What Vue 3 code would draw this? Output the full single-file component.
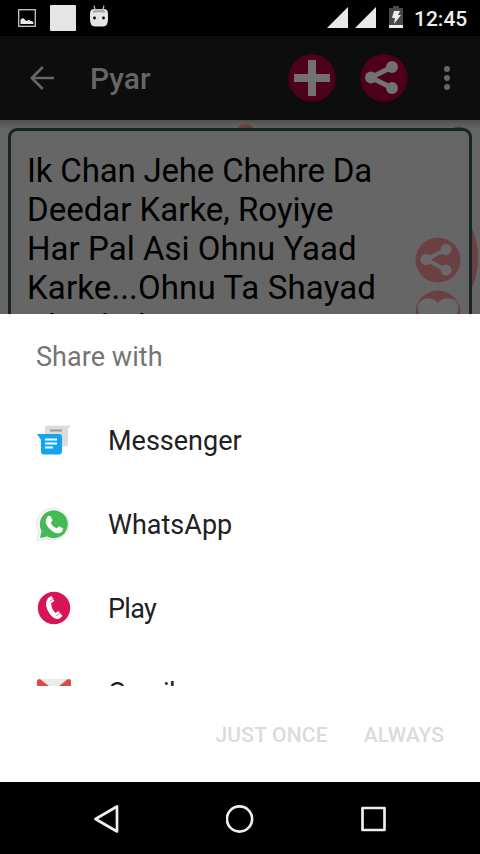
<script setup>
const lines = [
  { text: 'Ik Chan Jehe Chehre Da', spacing: -0.18 },
  { text: 'Deedar Karke, Royiye', spacing: 0 },
  { text: 'Har Pal Asi Ohnu Yaad', spacing: 0.03 },
  { text: 'Karke...Ohnu Ta Shayad', spacing: 0.13 },
  { text: 'Chaahida', spacing: -0.3 }
]
</script>

<template>
  <div class="screen">
    <header class="status">
      <svg class="s-pic" width="18" height="18" viewBox="0 0 18 18"><rect x=".7" y=".7" width="16.600" height="16.600" fill="none" stroke="#c4cac4" stroke-width="1.300"/><path d="M2.500 15v-4q1-2.500 3-1.500 1 .2 1.500 1.500l2 1q2-2 3.500 0 3-.5 3 3z" fill="#e8e8e8"/></svg>
      <span class="s-box"></span>
      <svg class="s-bot" width="18" height="22" viewBox="0 0 18 22"><path d="M4 .5l1 4M14 .5l-1 4" stroke="#bbb" stroke-width="1.200"/><path d="M0 9q0-5 4-5h10q4 0 4 5v5q0 7.500-5 7.500H5q-5 0-5-7.500z" fill="#e5e5e5"/><path d="M3.500 4.500h11l.5 3.500q-6-1.500-12 0z" fill="#aaa"/><circle cx="4.500" cy="13" r="1.400"/><circle cx="13.500" cy="13" r="1.400"/></svg>
      <span class="grow"></span>
      <svg class="s-sig" width="49" height="21" viewBox="0 0 49 21"><path d="M0 21L21 0v21zM28 21L49 0v21z" fill="#e8e8e8"/></svg>
      <svg class="s-bat" width="14" height="22" viewBox="0 0 14 22"><path d="M0 2h4V0h6v2h4v17H0z" fill="#494949"/><path d="M0 19h14v3H0z" fill="#eee"/><path d="M5 5h6l-2 4h3l-7 9 1-6H3z" fill="#eee"/></svg>
      <span class="time">12:45</span>
    </header>

    <div class="appbar">
      <svg class="back" width="26" height="24" viewBox="0 0 26 24" fill="none" stroke="#666" stroke-width="2.600"><path d="M25 12H3M13.800 1L2.800 12l11 11"/></svg>
      <h1>Pyar</h1>
      <span class="grow"></span>
      <svg class="add" width="48" height="48" viewBox="0 0 48 48"><circle cx="24" cy="24" r="23.700" fill="#4d0018"/><path d="M20 6h8v14h14v8H28v14h-8V28H6v-8h14z" fill="#727272"/></svg>
      <svg class="shr" width="48" height="48" viewBox="0 0 48 48"><circle cx="24" cy="24" r="23.700" fill="#4d0018"/><path d="M32 13L11 23.500l21 10.500" fill="none" stroke="#727272" stroke-width="5"/><g fill="#727272"><circle cx="32" cy="13" r="6"/><circle cx="11" cy="23.500" r="6"/><circle cx="32" cy="34" r="6"/></g></svg>
      <svg class="more" width="6" height="26" viewBox="0 0 6 26" fill="#666"><circle cx="3" cy="4" r="3"/><circle cx="3" cy="13" r="3"/><circle cx="3" cy="22" r="3"/></svg>
    </div>

    <main class="content">
      <svg class="backdrop" width="480" height="194" viewBox="0 0 480 194"><g fill="#6b4042"><circle cx="245.500" cy="14" r="10"/><circle cx="400" cy="138" r="78"/></g><circle cx="459" cy="17" r="10.500" fill="#4c4042"/></svg>
      <div class="card">
        <p><span v-for="l in lines" :key="l.text" :style="{ letterSpacing: l.spacing + 'px' }">{{ l.text }}</span></p>
        <div class="actions">
          <svg width="46" height="46" viewBox="0 0 46 46"><circle cx="23" cy="23" r="22.500" fill="#6b4042"/><path d="M31 12.500L11 22.500l20 10.500" fill="none" stroke="#696969" stroke-width="4"/><g fill="#696969"><circle cx="31" cy="12.500" r="5.500"/><circle cx="11" cy="22.500" r="5.500"/><circle cx="31" cy="33" r="5.500"/></g></svg>
          <svg width="46" height="46" viewBox="0 0 46 46"><circle cx="23" cy="23" r="22.500" fill="#6b4042"/><path d="M23 13C19 7 10 7 5.500 11c-8 8 2 20 17.500 31 15.500-11 25.500-23 17.500-31-4.500-4-13.500-4-17.500 2z" fill="#696969"/></svg>
        </div>
      </div>
    </main>

    <section class="sheet">
      <h2>Share with</h2>
      <ul>
        <li>
          <svg width="36" height="36" viewBox="0 0 36 36"><path d="M10 3.500h25l-3 4v15q0 2-2 2H12q-3 0-3-3v-16z" fill="#dcdcdc"/><path d="M14 8.500h12" stroke="#999" stroke-width="2"/><path d="M1 12h22q3 0 3 3v14.500q0 3-3 3H8q-3 0-3-3V18z" fill="#11a5f0"/><path d="M9 17.500h12M9 21.500h12M9 25.500h8" stroke="#fff" stroke-width="2"/></svg>
          <span>Messenger</span>
        </li>
        <li>
          <svg width="36" height="36" viewBox="0 0 36 36"><path d="M1 35l2-9A16 16 0 1 1 10 32.500z" fill="#fafafa" stroke="#d8d8d8" stroke-width=".8"/><path d="M4 32l1.500-7A14 14 0 1 1 11 30.500z" fill="#45b953"/><path d="M11.500 10.500q1-1 2-.5l1.500.5 1.500 4-1.800 2.500q2 4 6 5.500l2-2.300 4.300 2q.5 4-4 5-5 .5-10-5-6-6-1.500-11.700z" fill="#fff"/></svg>
          <span>WhatsApp</span>
        </li>
        <li class="play">
          <svg width="36" height="36" viewBox="0 0 36 36"><circle cx="18" cy="18" r="16.200" fill="#d81458"/><path d="M12 8l3.500-2 3 5-3.300 2q0 6 4.300 10l3-2 4 5-3 2.500q-4 2-9-3.500-7.500-10-2.500-17z" fill="#fff"/><path d="M13.500 11.500l4.500-3M20 26l5-3.500" stroke="#d81458" stroke-width=".6"/></svg>
          <span>Play</span>
        </li>
        <li class="gmail">
          <svg width="36" height="36" viewBox="0 0 36 36"><rect x="1" y="5" width="34" height="26" rx="2" fill="#e9ece7"/><path d="M1 31V7q0-2 3-2l14 11L32 5q3 0 3 2v24h-5V13L18 22 6 13v18z" fill="#df4b43"/></svg>
          <span>Gmail</span>
        </li>
      </ul>
      <div class="buttons"><span class="once">JUST ONCE</span><span>ALWAYS</span></div>
    </section>

    <nav>
      <svg width="28" height="30" viewBox="0 0 28 30"><path d="M24 2.500v25L2.500 15z"/></svg>
      <svg width="28" height="30" viewBox="0 0 28 30"><circle cx="13.500" cy="15" r="12.600"/></svg>
      <svg width="28" height="30" viewBox="0 0 28 30"><rect x="3.500" y="4" width="22" height="22"/></svg>
    </nav>
  </div>
</template>

<style>
body { margin: 0; background: #000; }
</style>

<style scoped>
.screen { width: 480px; height: 854px; display: flex; flex-direction: column; overflow: hidden; font-family: Roboto, sans-serif; }
svg { display: block; flex: none; }
.grow { flex: 1; }
.status { height: 36px; flex: none; background: #000; display: flex; align-items: flex-start; padding: 0 12px 0 18px; box-sizing: border-box; }
.s-pic { margin-top: 9px; }
.s-box { width: 26px; height: 26px; margin: 5px 0 0 14px; border-radius: 1px; background: #e5e5e5; }
.s-bot { margin: 5px 0 0 14px; }
.s-sig { margin-top: 7px; }
.s-bat { margin: 6px 0 0 13px; }
.time { margin-left: 11px; font-size: 21px; line-height: 38px; font-weight: 500; color: #eee; width: 54px; white-space: nowrap; }
.appbar { height: 84px; flex: none; background: #0d0d0d; display: flex; align-items: center; padding: 0 30px 0 29px; box-sizing: border-box; }
h1 { margin: 2px 0 0 35px; font-size: 30px; line-height: 36px; font-weight: 500; color: #666; }
.shr { margin-left: 24px; }
.more { margin-left: 36px; }
.content { height: 194px; flex: none; box-sizing: border-box; padding: 8px; position: relative; overflow: hidden; background: linear-gradient(#505050, #606060 6px, #666 10px); }
.backdrop { position: absolute; left: 0; top: 0; }
.card { position: relative; height: 260px; box-sizing: border-box; border: 3px solid #172523; border-radius: 9px; background: #666; padding: 20px 8px 0 16px; display: flex; justify-content: space-between; }
p { margin: 0; font-size: 33px; line-height: 39px; color: #000; }
p span { display: block; white-space: nowrap; }
.actions { padding-top: 86px; display: flex; flex-direction: column; gap: 7px; }
.sheet { height: 468px; flex: none; background: #fff; display: flex; flex-direction: column; }
h2 { margin: 0; padding: 0 36px; height: 84px; line-height: 86px; font-size: 27px; font-weight: 400; color: #757575; letter-spacing: .05px; }
ul { margin: 0; padding: 0; list-style: none; height: 288px; overflow: hidden; }
li { height: 84px; display: flex; align-items: center; padding-left: 36px; gap: 36px; font-size: 27px; color: #212121; }
li span { padding-top: 2px; }
.play span { letter-spacing: -.7px; }
.gmail span { letter-spacing: -.6px; }
.buttons { flex: 1; display: flex; justify-content: flex-end; align-items: center; gap: 36px; padding: 2px 36px 0 0; font-size: 21px; font-weight: 500; color: #dbdbdb; }
.once { letter-spacing: .2px; }
nav { height: 72px; flex: none; background: #000; display: flex; justify-content: space-between; padding: 1px 93px 0; box-sizing: border-box; align-items: center; }
nav svg { fill: none; stroke: #eee; stroke-width: 2.700; stroke-linejoin: round; }
</style>
